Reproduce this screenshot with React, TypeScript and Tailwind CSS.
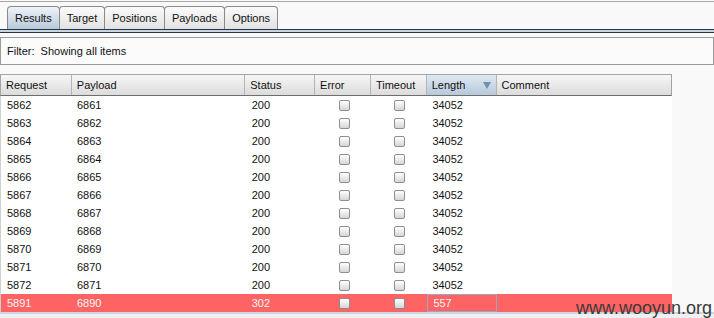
const tabs = ["Results", "Target", "Positions", "Payloads", "Options"];

const columns = [
  { key: "request", label: "Request", w: "w-[71px]" },
  { key: "payload", label: "Payload", w: "w-[174px]" },
  { key: "status", label: "Status", w: "w-[70px]" },
  { key: "error", label: "Error", w: "w-[56px]" },
  { key: "timeout", label: "Timeout", w: "w-[56px]" },
  { key: "length", label: "Length", w: "w-[70px]" },
  { key: "comment", label: "Comment", w: "w-[175px]" },
];

const rows = [
  ["5862", "6861", "200", "34052"],
  ["5863", "6862", "200", "34052"],
  ["5864", "6863", "200", "34052"],
  ["5865", "6864", "200", "34052"],
  ["5866", "6865", "200", "34052"],
  ["5867", "6866", "200", "34052"],
  ["5868", "6867", "200", "34052"],
  ["5869", "6868", "200", "34052"],
  ["5870", "6869", "200", "34052"],
  ["5871", "6870", "200", "34052"],
  ["5872", "6871", "200", "34052"],
];

function Checkbox() {
  return (
    <span className="block h-[11px] w-[11px] rounded-[2px] border border-[#8e8e8e] bg-gradient-to-b from-[#ffffff] to-[#d6d6d6]" />
  );
}

function Row({ cells, hit }: { cells: string[]; hit?: boolean }) {
  const text = hit ? "text-[#f4f4f4]" : "text-[#111]";
  return (
    <div className={`flex h-[18px] items-center ${hit ? "bg-[#ff6464]" : "bg-white"} ${text}`}>
      <div className="w-[71px] pl-[6px]">{cells[0]}</div>
      <div className="w-[174px] pl-[5px]">{cells[1]}</div>
      <div className="w-[70px] pl-[6px]">{cells[2]}</div>
      <div className="flex w-[56px] justify-center pl-[2px]">
        <Checkbox />
      </div>
      <div className="flex w-[56px] justify-center">
        <Checkbox />
      </div>
      <div
        className={`flex h-[18px] w-[70px] items-center pl-[5px] ${hit ? "border border-[#9aa6c4]" : ""}`}
      >
        {cells[3]}
      </div>
      <div className="w-[175px]" />
    </div>
  );
}

export default function App() {
  return (
    <div className="relative h-[318px] w-[714px] overflow-hidden bg-[#f9f9f9] text-[11px] leading-none text-[#111] [font-family:'Liberation_Sans',Arial,sans-serif]">
      {/* top rule */}
      <div className="mt-[1px] h-[1px] bg-[#a8a8a8]" />

      {/* tabs */}
      <div className="flex h-[27px] items-end pl-[7px]">
        {tabs.map((t, i) => (
          <div
            key={t}
            className={`flex h-[23px] items-center rounded-t-[4px] border border-b-0 border-[#8a8a8a] px-[7px] ${
              i === 0
                ? "bg-gradient-to-b from-[#eef3f8] to-[#b9cadb]"
                : "bg-gradient-to-b from-[#fbfbfb] to-[#e2e2e2]"
            } ${i > 0 ? "-ml-[1px]" : ""}`}
          >
            {t}
          </div>
        ))}
      </div>

      {/* tab underline */}
      <div className="h-[4px] border-y border-[#2c3440] bg-[#c6d5e4]" />

      {/* filter bar */}
      <div className="mt-[4px] flex h-[28px] items-center border border-[#9a9a9a] bg-[#fbfbfb] pl-[6px]">
        Filter:&nbsp; Showing all items
      </div>

      {/* table */}
      <div className="mt-[9px] w-[672px]">
        <div className="flex h-[22px] border border-b-[#6e6e6e] border-[#a4a4a4] bg-gradient-to-b from-[#f6f6f6] to-[#dcdcdc]">
          {columns.map((c, i) => (
            <div
              key={c.key}
              className={`relative flex items-center pl-[5px] ${c.w} ${
                i < columns.length - 1 ? "border-r border-[#b4b4b4]" : ""
              } ${c.key === "length" ? "bg-gradient-to-b from-[#dfe8f1] to-[#b7c9da]" : ""}`}
            >
              {c.label}
              {c.key === "length" && (
                <span className="absolute right-[5px] top-[7px] h-0 w-0 border-x-[4px] border-t-[7px] border-x-transparent border-t-[#6f8fb0]" />
              )}
            </div>
          ))}
        </div>
        <div className="border-l border-[#d0d0d0]">
          {rows.map((r) => (
            <Row key={r[0]} cells={r} />
          ))}
          <Row cells={["5891", "6890", "302", "557"]} hit />
        </div>
      </div>

      {/* bottom strip */}
      <div className="h-[2px] bg-[#cdd6e2]" />
      <div className="h-[4px] bg-[#eef0f2]" />

      {/* watermark */}
      <div className="absolute bottom-[0px] right-[2px] text-[18px] leading-[20px] text-[#3a3a3a] [font-family:'Liberation_Sans',Arial,sans-serif]">
        www.wooyun.org
      </div>
    </div>
  );
}
